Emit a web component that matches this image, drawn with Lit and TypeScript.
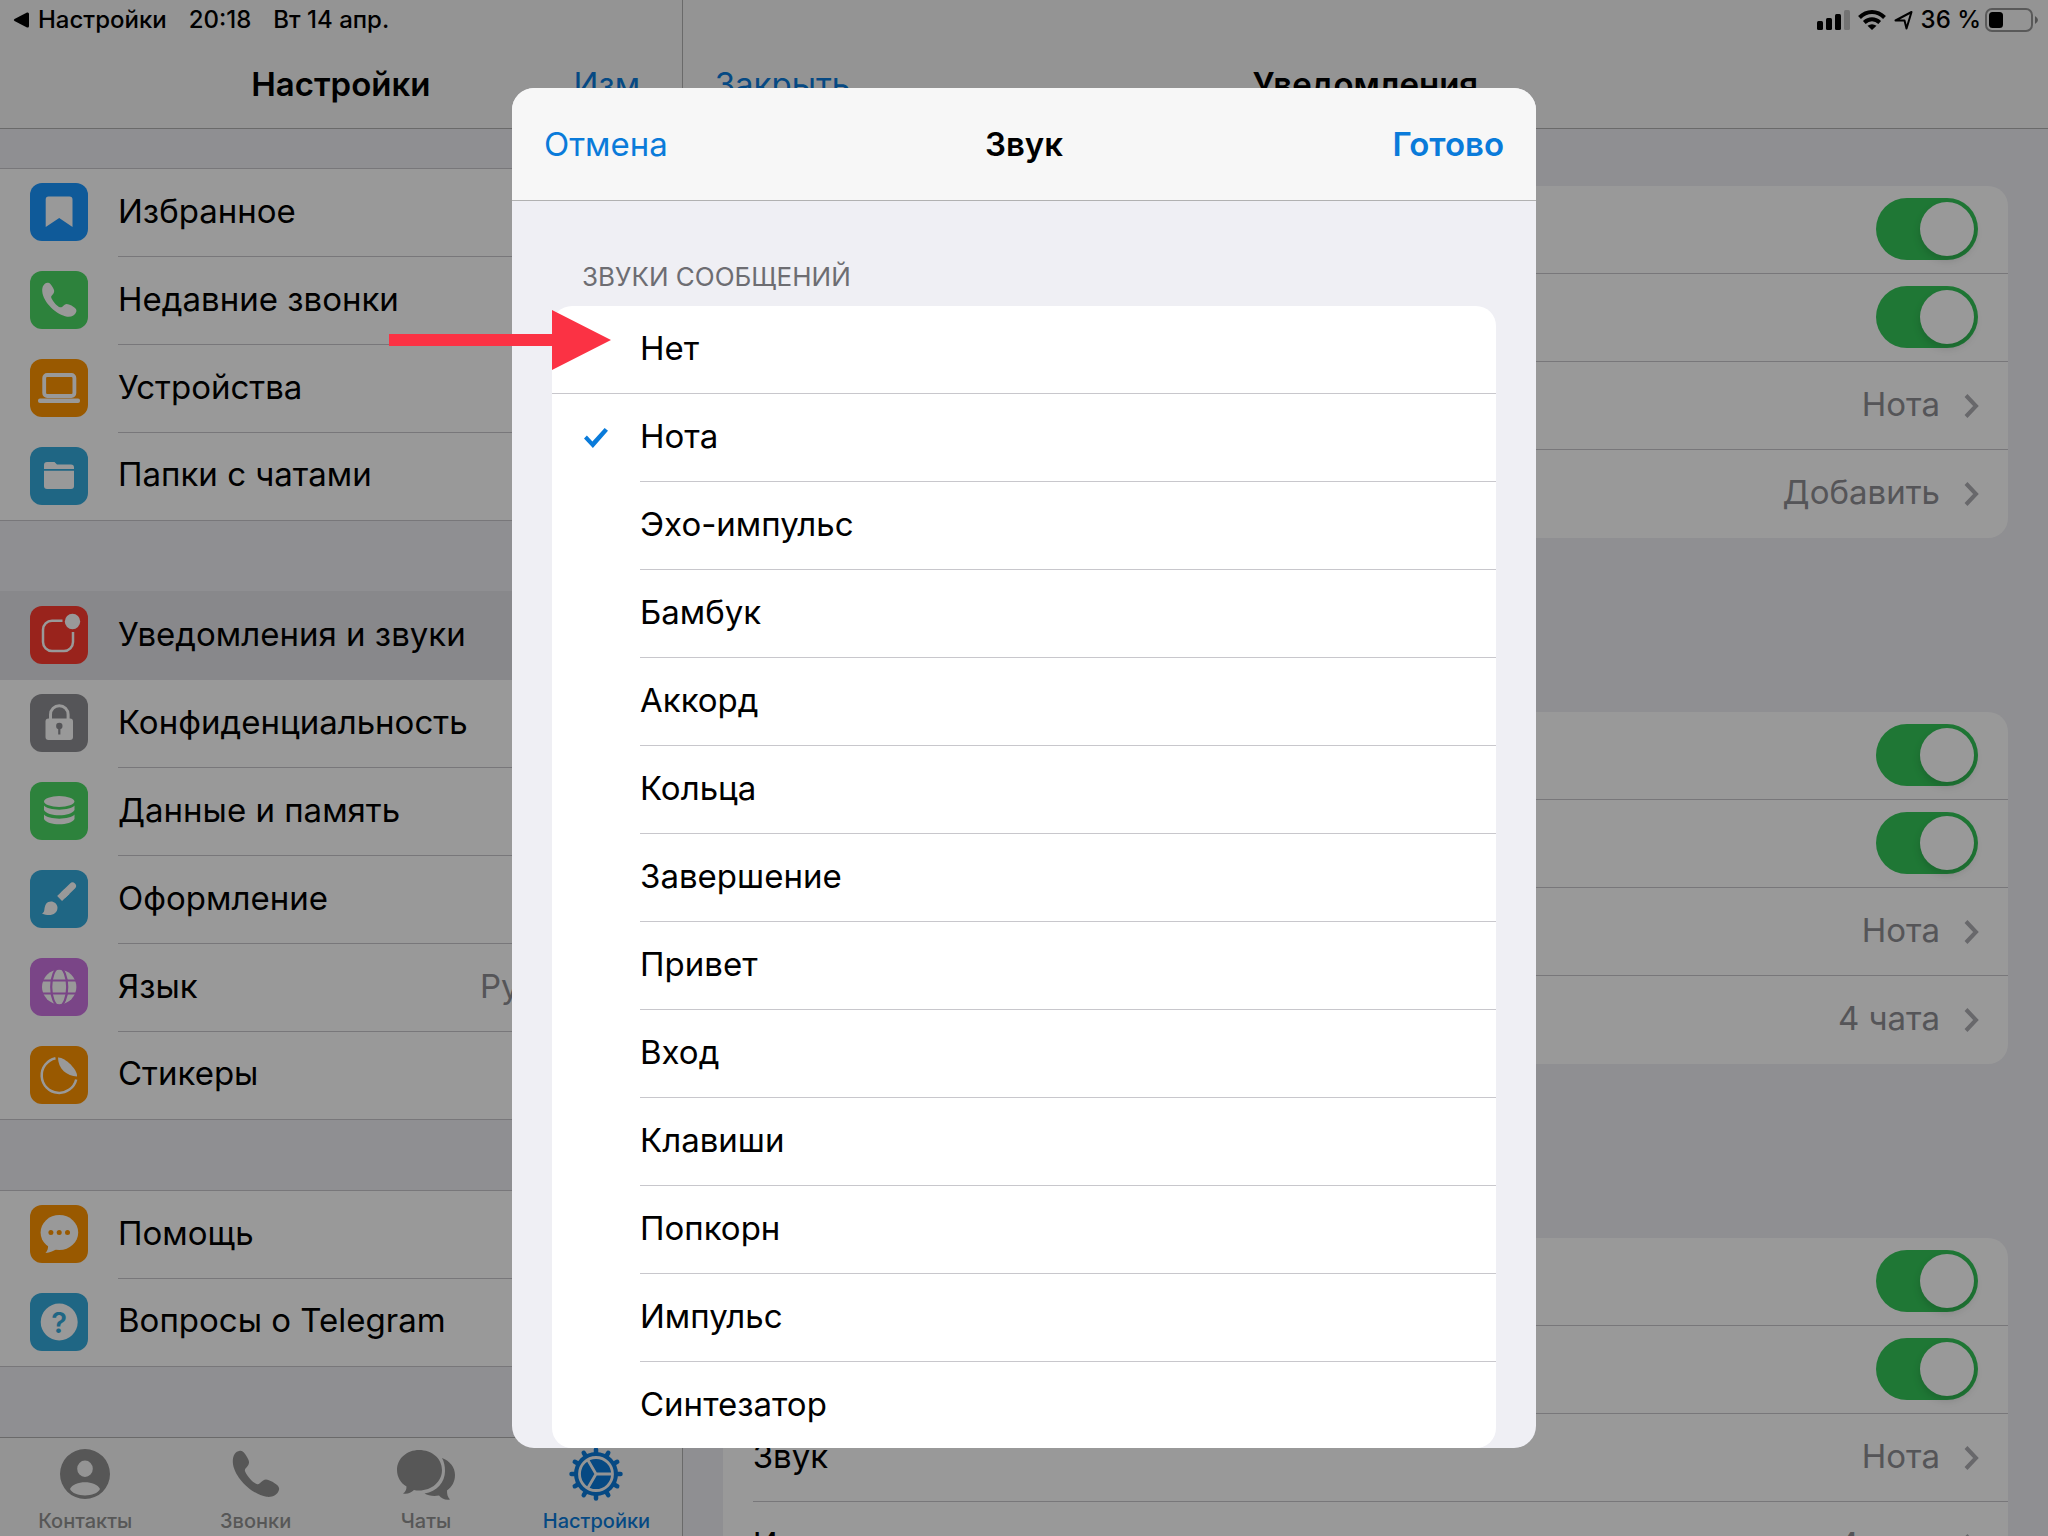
import { LitElement, html, svg, css, nothing, type TemplateResult } from "lit";
import { customElement, property, state } from "lit/decorators.js";
import { classMap } from "lit/directives/class-map.js";

const phonePath =
  "M22 1C30-1 36 6 44 20C50 30 52 36 46 46C40 54 35 56 38 63C44 77 62 98 74 101C80 102 84 96 92 90C100 84 108 88 120 94C136 104 143 110 139 120C134 134 120 141 102 139C62 134 4 82 1 36C0 16 8 3 22 1Z";

const glyphs: Record<string, TemplateResult> = {
  bookmark: svg`<path fill="#fff" d="M18.5 13.5H39.500a3 3 0 0 1 3 3V44L29.200 35 15.700 44V16.500a3 3 0 0 1 2.800-3Z"/>`,
  phone: svg`<g transform="translate(12 11.500) scale(.246)"><path fill="#fff" d=${phonePath}/></g>`,
  laptop: svg`<rect x="14.200" y="16" width="30.200" height="21" rx="3" fill="none" stroke="#fff" stroke-width="3.800"/><rect x="8" y="39.500" width="42" height="4.500" rx="2" fill="#fff"/>`,
  folder: svg`<path fill="#fff" d="M14 22V18a3 3 0 0 1 3-3h7.500l2.500 2.500H41a3 3 0 0 1 3 3V22Z"/><path fill="#fff" d="M14 23.700H44V39a3 3 0 0 1-3 3H17a3 3 0 0 1-3-3Z"/>`,
  badge: svg`<path fill="none" stroke="#fff" stroke-width="2.500" d="M32.500 14.700H22a9 9 0 0 0-9 9V36a9 9 0 0 0 9 9H34a9 9 0 0 0 9-9V26"/><circle cx="42.500" cy="15.500" r="7.700" fill="#fff"/>`,
  lock: svg`<path fill="none" stroke="#fff" stroke-width="3" d="M20.500 26V20.500a8.800 8.800 0 0 1 17.600 0V26"/><rect x="15.500" y="24.500" width="27.500" height="21.500" rx="3" fill="#fff"/><circle cx="29.300" cy="32" r="3.200" fill="#8e8e93"/><path stroke="#8e8e93" stroke-width="2.200" d="M29.300 32V40.500"/>`,
  disks: svg`<ellipse cx="29.200" cy="19.500" rx="15.200" ry="5.400" fill="#fff"/><path fill="#fff" d="M14 23.500C18 29 40.500 29 44.500 23.500V28C41 35 17.500 35 14 28ZM14 32.500C18 38 40.500 38 44.500 32.500V37C41 44 17.500 44 14 37Z"/>`,
  brush: svg`<path stroke="#fff" stroke-width="7" stroke-linecap="round" d="M42.500 16L34 24.300"/><path stroke="#fff" stroke-width="7" d="M37 21.400L29.600 28.600"/><path fill="#fff" d="M12 43.500C15.500 42 13.500 38 16 34C19.500 29.500 27 31.500 27.500 37.500C27.500 44.500 20 47 12 43.500Z"/>`,
  globe: svg`<circle cx="29.200" cy="29" r="17.200" fill="#fff"/><g fill="none" stroke="#cb73e1" stroke-width="2.200"><ellipse cx="29.200" cy="29" rx="8" ry="19"/><path d="M11 22.500H47.500M11 35.500H47.500"/></g>`,
  sticker: svg`<path fill="none" stroke="#fff" stroke-width="2.500" d="M25.500 12.300A17.500 17.500 0 1 0 46.200 33.500"/><path fill="#fff" d="M28 11.500C35 11 48 24 47 30.500C37 30 28 23 28 11.500Z"/>`,
  chat: svg`<ellipse cx="29.400" cy="27.500" rx="18.800" ry="17.500" fill="#fff"/><path fill="#fff" d="M18 39C18.500 43 17.500 46 15.500 48C20 47.500 24 46 27 43.500Z"/><g fill="#ff9500"><circle cx="20.900" cy="27.500" r="2.500"/><circle cx="29.200" cy="27.500" r="2.500"/><circle cx="37.500" cy="27.500" r="2.500"/></g>`,
  question: svg`<circle cx="29.200" cy="29" r="18.500" fill="#fff"/><text x="29.200" y="39.500" text-anchor="middle" font-size="29" font-weight="600" fill="#34aadc">?</text>`,
};

const chevron = html`<svg class="chevron" viewBox="0 0 14 24" width="14" height="24" aria-hidden="true">
  <path d="M2 1.500L12 12L2 22.500" fill="none" stroke="#adadb2" stroke-width="4"/>
</svg>`;

interface MenuItem {
  icon: string;
  color: string;
  title: string;
  value?: string;
  selected?: boolean;
}

const menu: MenuItem[][] = [
  [
    { icon: "bookmark", color: "#1a96ff", title: "Избранное" },
    { icon: "phone", color: "#4cd964", title: "Недавние звонки" },
    { icon: "laptop", color: "#ff9500", title: "Устройства" },
    { icon: "folder", color: "#34aadc", title: "Папки с чатами" },
  ],
  [
    { icon: "badge", color: "#ff3b30", title: "Уведомления и звуки", selected: true },
    { icon: "lock", color: "#8e8e93", title: "Конфиденциальность" },
    { icon: "disks", color: "#4cd964", title: "Данные и память" },
    { icon: "brush", color: "#34aadc", title: "Оформление" },
    { icon: "globe", color: "#cb73e1", title: "Язык", value: "Русский" },
    { icon: "sticker", color: "#ff9500", title: "Стикеры" },
  ],
  [
    { icon: "chat", color: "#ff9500", title: "Помощь" },
    { icon: "question", color: "#34aadc", title: "Вопросы о Telegram" },
  ],
];

const teeth = Array.from({ length: 12 }, (_, i) => i * 30);

const tabs = [
  {
    title: "Контакты",
    icon: svg`<path fill="currentColor" fill-rule="evenodd" d="M25 0a25 25 0 1 1 0 50a25 25 0 1 1 0-50ZM25 11.500a7.800 8.200 0 1 0 0 16.400a7.800 8.200 0 1 0 0-16.400ZM10 40C14 31 36 31 40 40C36 48.500 14 48.500 10 40Z"/>`,
  },
  {
    title: "Звонки",
    icon: svg`<g transform="translate(1.500 1.500) scale(.333)"><path fill="currentColor" d=${phonePath}/></g>`,
  },
  {
    title: "Чаты",
    icon: svg`<path fill="currentColor" d="M18 1C31 1 41 9.500 41 21S31 41.500 18 41.500C16 41.500 14.500 41.400 13 41C10 44 6 45.500 2 44.500C4.500 43 5.500 40.500 5.500 37.500C-.5 34-4 28-4 21C-4 9.500 6 1 18 1Z"/><path fill="currentColor" d="M41 9C49 12 54 18.500 54 26C54 32.500 51 38 46 41.500C46 45 46.500 48 49 50.500C44.500 51.500 40.500 49.500 38 46.500C32 47.500 27 46.500 23.500 44.500C36 42.500 44 33 44 22C44 17 43 12.500 41 9Z"/>`,
  },
  {
    title: "Настройки",
    active: true,
    icon: svg`<g stroke="currentColor" stroke-width="4.500" stroke-linecap="round">${teeth.map(
      (a) => svg`<path d="M25 5V0.500" transform="rotate(${a} 25 25)"/>`,
    )}</g><circle cx="25" cy="25" r="22" fill="currentColor"/><g fill="none" stroke="#f7f7f7" stroke-width="2.800"><circle cx="25" cy="25" r="16.500"/><path d="M25 25H41.500M25 25L16.700 10.700M25 25L16.700 39.300"/></g>`,
  },
];

const notificationGroups = ["Добавить", "4 чата", "4 чата"];

const sounds = [
  "Нет",
  "Нота",
  "Эхо-импульс",
  "Бамбук",
  "Аккорд",
  "Кольца",
  "Завершение",
  "Привет",
  "Вход",
  "Клавиши",
  "Попкорн",
  "Импульс",
  "Синтезатор",
];

const base = css`
  :host {
    display: block;
    min-width: 0;
    min-height: 0;
  }
  * {
    box-sizing: border-box;
  }
  button {
    appearance: none;
    border: 0;
    margin: 0;
    padding: 0;
    background: none;
    font: inherit;
    color: inherit;
    text-align: left;
  }
  ul {
    list-style: none;
    margin: 0;
    padding: 0;
  }
  h1,
  h2,
  h3 {
    margin: 0;
    font-size: 33px;
    font-weight: 600;
    line-height: 40px;
  }
  svg {
    display: block;
    flex: none;
    overflow: visible;
  }
  .pane {
    height: 100%;
    display: flex;
    flex-direction: column;
    overflow: hidden;
    background: #efeff4;
  }
  .top {
    flex: none;
    background: #f7f7f7;
    border-bottom: 1px solid #b1b1b1;
  }
  .status {
    height: 40px;
    display: flex;
    align-items: center;
    font-size: 24px;
    font-weight: 500;
    line-height: 32px;
  }
  .nav {
    height: 88px;
    display: grid;
    grid-template-columns: 1fr auto 1fr;
    align-items: center;
    padding: 0 32px;
  }
  .nav .end {
    justify-self: end;
  }
  .nav .start {
    justify-self: start;
  }
  .link {
    color: #0a7bda;
  }
  .title,
  .value {
    padding-bottom: 4px;
  }
  .value {
    color: #8e8e93;
  }
`;

@customElement("settings-menu")
export class SettingsMenu extends LitElement {
  static styles = [
    base,
    css`
      .pane {
        border-right: 1px solid #b1b1b1;
      }
      .status {
        gap: 22px;
        padding: 0 13px;
      }
      .back {
        display: flex;
        align-items: center;
        gap: 9px;
      }
      .groups {
        flex: 1;
        min-height: 0;
        overflow: hidden;
        display: flex;
        flex-direction: column;
        gap: 70px;
        padding-top: 39px;
      }
      .group {
        flex: none;
        background: #fff;
        border-top: 1px solid #c8c7cc;
      }
      .group li:last-child {
        border-bottom: 1px solid #c8c7cc;
      }
      .row {
        width: 100%;
        height: 88px;
        display: flex;
        align-items: center;
        gap: 30px;
        padding-left: 30px;
      }
      li:last-child .row {
        height: 87px;
      }
      .selected {
        background: #e3e3e8;
        box-shadow: 0 -1px #e3e3e8;
      }
      .tile {
        margin-bottom: 2px;
      }
      .line {
        flex: 1;
        height: 100%;
        display: flex;
        align-items: center;
        gap: 24px;
        padding-right: 30px;
        border-bottom: 1px solid #c8c7cc;
      }
      .selected .line,
      li:last-child .line {
        border-bottom-color: transparent;
      }
      .title {
        flex: 1;
      }
      .tabs {
        flex: none;
        display: grid;
        grid-template-columns: repeat(4, 1fr);
        background: #f7f7f7;
        border-top: 1px solid #b1b1b1;
        padding: 11px 0 3px;
      }
      .tab {
        display: flex;
        flex-direction: column;
        align-items: center;
        gap: 10px;
        color: #929292;
        font-size: 20px;
        font-weight: 500;
        line-height: 24px;
      }
      .tab.active {
        color: #0a7bda;
      }
    `,
  ];

  render() {
    return html`<section class="pane">
      <header class="top">
        <div class="status">
          <button class="back">
            <svg width="16" height="16" viewBox="0 0 16 16" aria-hidden="true">
              <path d="M1.500 7L14 .5Q16 0 16 2V14Q16 16 14 15.500L1.500 9Q0 8 1.500 7Z" />
            </svg>
            Настройки
          </button>
          <span>20:18</span>
          <span>Вт 14 апр.</span>
        </div>
        <div class="nav">
          <span></span>
          <h1>Настройки</h1>
          <button class="link end">Изм.</button>
        </div>
      </header>
      <div class="groups">
        ${menu.map(
          (group) => html`<ul class="group">
            ${group.map(
              (item) => html`<li>
                <button class=${classMap({ row: true, selected: !!item.selected })}>
                  <svg class="tile" width="58" height="58" viewBox="0 0 58 58" aria-hidden="true">
                    <rect width="58" height="58" rx="12" fill=${item.color} />
                    ${glyphs[item.icon]}
                  </svg>
                  <span class="line">
                    <span class="title">${item.title}</span>
                    ${item.value ? html`<span class="value">${item.value}</span>` : nothing} ${chevron}
                  </span>
                </button>
              </li>`,
            )}
          </ul>`,
        )}
      </div>
      <nav class="tabs">
        ${tabs.map(
          (tab) => html`<button class=${classMap({ tab: true, active: !!tab.active })}>
            <svg width="50" height="50" viewBox="0 0 50 50" aria-hidden="true">${tab.icon}</svg>
            ${tab.title}
          </button>`,
        )}
      </nav>
    </section>`;
  }
}

@customElement("notification-settings")
export class NotificationSettings extends LitElement {
  static styles = [
    base,
    css`
      .status {
        justify-content: flex-end;
        gap: 8px;
        padding: 0 10px;
      }
      .battery {
        display: flex;
        align-items: center;
        gap: 4px;
      }
      .groups {
        flex: 1;
        min-height: 0;
        overflow: hidden;
        display: flex;
        flex-direction: column;
        gap: 174px;
        padding: 57px 40px 0;
      }
      .group {
        flex: none;
        background: #fff;
        border-radius: 20px;
        padding-left: 30px;
        overflow: hidden;
      }
      .row {
        width: 100%;
        height: 88px;
        display: flex;
        align-items: center;
        gap: 24px;
        padding-right: 30px;
        border-bottom: 1px solid #c8c7cc;
      }
      li:last-child .row {
        border-bottom-color: transparent;
      }
      .title {
        flex: 1;
      }
      .toggle {
        appearance: none;
        flex: none;
        display: flex;
        width: 102px;
        height: 62px;
        margin: 0 0 2px;
        padding: 4px;
        border-radius: 31px;
        background: #e5e5ea;
      }
      .toggle::before {
        content: "";
        width: 54px;
        height: 54px;
        border-radius: 50%;
        background: #fff;
        box-shadow: 0 4px 8px rgba(0, 0, 0, 0.15);
      }
      .toggle:checked {
        background: #34c759;
        justify-content: flex-end;
      }
    `,
  ];

  render() {
    return html`<section class="pane">
      <header class="top">
        <div class="status">
          <svg width="33" height="22" viewBox="0 0 33 22" aria-hidden="true">
            <rect y="12" width="6" height="9" rx="1.500" />
            <rect x="9" y="9" width="6" height="12" rx="1.500" />
            <rect x="18" y="5" width="6" height="16" rx="1.500" />
            <rect x="27" y="1" width="6" height="20" rx="1.500" opacity=".22" />
          </svg>
          <svg width="28" height="20" viewBox="0 0 28 20" aria-hidden="true">
            <g fill="none" stroke="#000" stroke-width="4">
              <path d="M1.500 7.500Q7 2 14 2T26.500 7.500" />
              <path d="M6.300 12.500Q9.800 9.300 14 9.300T21.700 12.500" />
            </g>
            <path d="M9.500 15.800Q14 12.500 18.500 15.800L14 20Z" />
          </svg>
          <svg width="19" height="20" viewBox="0 0 19 20" aria-hidden="true">
            <path d="M1.500 10.500L17.500 2L12.500 18.500L10.500 10.500Z" fill="none" stroke="#000" stroke-width="2" stroke-linejoin="round" />
          </svg>
          <div class="battery">
            <span>36 %</span>
            <svg width="53" height="24" viewBox="0 0 53 24" aria-hidden="true">
              <rect x="1" y="1" width="46" height="22" rx="6" fill="none" stroke="#000" stroke-opacity=".4" stroke-width="2" />
              <rect x="4" y="4" width="14" height="16" rx="3.500" />
              <path d="M50 8Q53 10 53 12T50 16Z" opacity=".45" />
            </svg>
          </div>
        </div>
        <div class="nav">
          <button class="link start">Закрыть</button>
          <h2>Уведомления</h2>
          <span></span>
        </div>
      </header>
      <div class="groups">
        ${notificationGroups.map(
          (exceptions, i) => html`<ul class="group">
            ${["Уведомления", "Предпросмотр"].map(
              (title, j) => html`<li class="row">
                <label class="title" for="toggle-${i}-${j}">${title}</label>
                <input class="toggle" id="toggle-${i}-${j}" type="checkbox" role="switch" checked />
              </li>`,
            )}
            <li>
              <button class="row"><span class="title">Звук</span><span class="value">Нота</span>${chevron}</button>
            </li>
            <li>
              <button class="row">
                <span class="title">Исключения</span><span class="value">${exceptions}</span>${chevron}
              </button>
            </li>
          </ul>`,
        )}
      </div>
    </section>`;
  }
}

@customElement("sound-sheet")
export class SoundSheet extends LitElement {
  static styles = [
    base,
    css`
      :host {
        position: relative;
      }
      .sheet {
        height: 100%;
        display: flex;
        flex-direction: column;
        overflow: hidden;
        border-radius: 22px;
        background: #efeff4;
      }
      .nav {
        flex: none;
        height: 113px;
        background: #f7f7f7;
        border-bottom: 1px solid #b1b1b1;
      }
      .done {
        font-weight: 600;
      }
      .body {
        flex: 1;
        min-height: 0;
        display: flex;
        flex-direction: column;
        padding: 60px 40px 0;
      }
      .caption {
        flex: none;
        padding: 0 30px 13px;
        font-size: 26px;
        font-weight: 400;
        line-height: 32px;
        color: #6d6d72;
      }
      .card {
        flex: 1;
        min-height: 0;
        overflow: hidden;
        border-radius: 20px;
        background: #fff;
      }
      .row {
        height: 88px;
        display: flex;
        align-items: center;
        gap: 32px;
        padding-left: 32px;
      }
      .radio {
        appearance: none;
        flex: none;
        width: 24px;
        height: 20px;
        margin: 0;
      }
      .radio:checked {
        background: #0a7bda;
        clip-path: polygon(0 52%, 12% 38%, 35% 68%, 86% 0, 100% 14%, 37% 100%);
      }
      .text {
        flex: 1;
        height: 100%;
        display: flex;
        align-items: center;
        padding-bottom: 4px;
        border-bottom: 1px solid #c8c7cc;
      }
      .row:first-child {
        border-bottom: 1px solid #c8c7cc;
      }
      .row:first-child .text {
        border-bottom: 0;
      }
      .arrow {
        position: absolute;
        left: -123px;
        top: 222px;
        pointer-events: none;
      }
    `,
  ];

  @property() chosen = "Нота";

  render() {
    return html`<section class="sheet" role="dialog" aria-labelledby="title">
        <header class="nav">
          <button class="link start">Отмена</button>
          <h2 id="title">Звук</h2>
          <button class="link done end">Готово</button>
        </header>
        <div class="body">
          <h3 class="caption">ЗВУКИ СООБЩЕНИЙ</h3>
          <div class="card">
            ${sounds.map(
              (sound) => html`<label class="row">
                <input
                  class="radio"
                  type="radio"
                  name="sound"
                  .checked=${sound === this.chosen}
                  @change=${() => (this.chosen = sound)}
                />
                <span class="text">${sound}</span>
              </label>`,
            )}
          </div>
        </div>
      </section>
      <svg class="arrow" width="222" height="60" viewBox="0 0 222 60" aria-hidden="true">
        <path fill="#fb3244" d="M0 24H163V0L222 30L163 60V36H0Z" />
      </svg>`;
  }
}

@customElement("app-root")
export class AppRoot extends LitElement {
  static styles = css`
    :host {
      display: block;
      font-family: Inter, Roboto, "Liberation Sans", sans-serif;
      font-size: 33px;
      line-height: 40px;
      color: #000;
    }
    .screen {
      position: relative;
      height: 100vh;
      display: grid;
      grid-template-columns: 1fr 2fr;
      grid-template-rows: minmax(0, 1fr);
      overflow: hidden;
    }
    .dim {
      position: absolute;
      inset: 0;
      display: grid;
      grid-template-columns: 50%;
      grid-template-rows: minmax(0, 1fr);
      justify-content: center;
      padding: 88px 0;
      background: rgba(0, 0, 0, 0.4);
    }
  `;

  @state() private sound = "Нота";

  render() {
    return html`<main class="screen">
      <settings-menu></settings-menu>
      <notification-settings></notification-settings>
      <div class="dim"><sound-sheet .chosen=${this.sound}></sound-sheet></div>
    </main>`;
  }
}
